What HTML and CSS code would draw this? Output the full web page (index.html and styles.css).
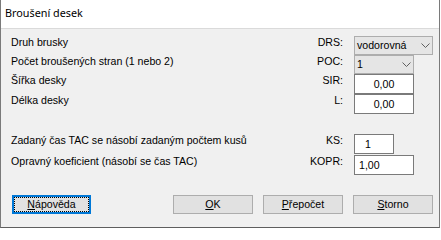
FILE: index.html
```html
<!DOCTYPE html>
<html lang="cs">
<head>
<meta charset="utf-8">
<title>Broušení desek</title>
<link rel="stylesheet" href="styles.css">
</head>
<body>
<div class="window">
  <div class="titlebar">Broušení desek</div>
  <div class="client">
    <div class="form form-top">
      <span class="lbl">Druh brusky</span>
      <span class="code">DRS:</span>
      <div class="combo w79"><span>vodorovná</span><svg class="chev" width="9" height="5" viewBox="0 0 9 5"><polyline points="0.5,0.5 4.5,4.5 8.5,0.5" fill="none" stroke="#606060" stroke-width="1"/></svg></div>

      <span class="lbl">Počet broušených stran (1 nebo 2)</span>
      <span class="code">POC:</span>
      <div class="combo w60"><span>1</span><svg class="chev" width="9" height="5" viewBox="0 0 9 5"><polyline points="0.5,0.5 4.5,4.5 8.5,0.5" fill="none" stroke="#606060" stroke-width="1"/></svg></div>

      <span class="lbl">Šířka desky</span>
      <span class="code">SIR:</span>
      <div class="edit w60 center">0,00</div>

      <span class="lbl">Délka desky</span>
      <span class="code">L:</span>
      <div class="edit w60 center">0,00</div>
    </div>

    <div class="form form-bottom">
      <span class="lbl">Zadaný čas TAC se násobí zadaným počtem kusů</span>
      <span class="code">KS:</span>
      <div class="edit w40 pad-ks">1</div>

      <span class="lbl">Opravný koeficient (násobí se čas TAC)</span>
      <span class="code">KOPR:</span>
      <div class="edit w60 pad-left">1,00</div>
    </div>

    <div class="buttons">
      <button class="btn default"><u>N</u>ápověda</button>
      <div class="btn-group">
        <button class="btn"><u>O</u>K</button>
        <button class="btn"><u>P</u>řepočet</button>
        <button class="btn"><u>S</u>torno</button>
      </div>
    </div>
  </div>
</div>
</body>
</html>
```

FILE: styles.css
```css
html, body {
  margin: 0;
  padding: 0;
  background: #ffffff;
}

body {
  font-family: "Liberation Sans", Arial, sans-serif;
  font-size: 10.6px;
  color: #000;
}

.window {
  width: 440px;
  height: 228px;
  box-sizing: border-box;
  border-left: 1px solid #7a7a7a;
  border-right: 1px solid #7a7a7a;
  border-bottom: 1px solid #5e5e5e;
  display: flex;
  flex-direction: column;
  background: #f0f0f0;
}

.titlebar {
  height: 28px;
  line-height: 26px;
  background: #ffffff;
  border-bottom: 1px solid #dadada;
  padding-left: 4px;
  font-family: "Noto Sans", "Open Sans", sans-serif;
  font-size: 10.8px;
  color: #000;
}

.client {
  flex: 1;
  padding: 7px 5px 0 10px;
}

.form {
  display: grid;
  grid-template-columns: 1fr 60px 80px;
  column-gap: 11px;
}

.form-top {
  grid-template-rows: 19px 19px 20px 20px;
}

.form-bottom {
  margin-top: 20px;
  grid-template-rows: 20px 20px;
  row-gap: 1px;
}

.lbl,
.code {
  line-height: 12px;
  align-self: start;
  white-space: nowrap;
}

.code {
  text-align: right;
}

.combo {
  box-sizing: border-box;
  height: 19px;
  border: 1px solid #adadad;
  background: #e5e5e5;
  display: flex;
  align-items: center;
  justify-content: space-between;
  padding: 0 2px 0 2px;
  line-height: 17px;
}

.chev {
  display: block;
}

.edit {
  box-sizing: border-box;
  height: 20px;
  border: 1px solid #7a7a7a;
  background: #ffffff;
  line-height: 18px;
}

.w79 { width: 79px; }
.w60 { width: 60px; }
.w40 { width: 40px; }

.center { text-align: center; }
.pad-ks { padding-left: 10px; }
.pad-left { padding-left: 4px; }

.buttons {
  margin-top: 20px;
  display: flex;
  justify-content: space-between;
  width: 422px;
}

.btn-group {
  display: flex;
  gap: 10px;
}

.btn {
  box-sizing: border-box;
  width: 80px;
  height: 19px;
  margin: 0;
  padding: 0;
  border: 1px solid #adadad;
  background: #e1e1e1;
  font-family: "Liberation Sans", Arial, sans-serif;
  font-size: 10.6px;
  line-height: 17px;
  color: #000;
  text-align: center;
}

.btn.default {
  margin-left: 1px;
  width: 79px;
  border: 2px solid #0078d7;
  line-height: 15px;
  outline: 1px dotted #000;
  outline-offset: -3px;
}

.btn u {
  text-decoration: underline;
  text-underline-offset: 1px;
}
```
